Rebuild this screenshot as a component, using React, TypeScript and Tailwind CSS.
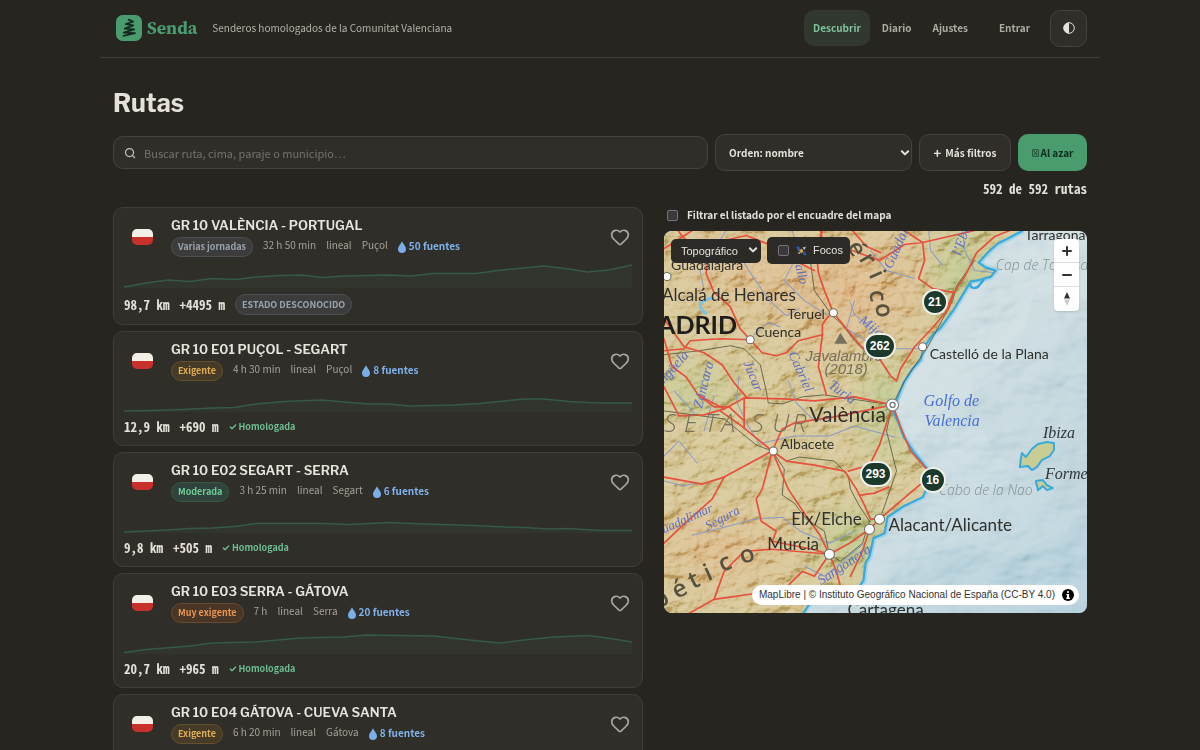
import type { ReactNode } from "react";
import { Heart, Search, Check } from "lucide-react";

const SANS = "font-['Noto_Sans_CJK_SC','Source_Sans_3','Open_Sans',sans-serif]";
const MONO = "font-['Noto_Sans_Mono_CJK_SC','DejaVu_Sans_Mono',monospace]";
const HEAD = "font-['Libre_Franklin','Inter','Noto_Sans_CJK_SC',sans-serif]";
const MAPUI = "font-['Liberation_Sans',Arial,sans-serif]";

type Tone = "gray" | "amber" | "green" | "orange";

interface Route {
  name: string;
  level: string;
  tone: Tone;
  time: string;
  town: string;
  springs: number;
  km: string;
  climb: string;
  approved: boolean;
  profile: string;
}

const tones: Record<Tone, string> = {
  gray: "border-[#4d5053] bg-[#3b3c3b] text-[#9ba3ad]",
  amber: "border-[#63502a] bg-[#463b26] text-[#e0ae55]",
  green: "border-[#355a45] bg-[#30433a] text-[#6fcf9b]",
  orange: "border-[#694a2f] bg-[#493627] text-[#ea9550]",
};

const routes: Route[] = [
  {
    name: "GR 10 VALÈNCIA - PORTUGAL",
    level: "Varias jornadas",
    tone: "gray",
    time: "32 h 50 min",
    town: "Puçol",
    springs: 50,
    km: "98,7 km",
    climb: "+4495 m",
    approved: false,
    profile: "0,23 22,19 44,16 66,17.5 88,14.5 112,15.5 132,13 155,11.5 178,11 198,13.5 220,12 265,11 287,12 308,9.5 352,9.5 378,6 400,4 420,2 445,5 464,8 485,6 508,1",
  },
  {
    name: "GR 10 E01 PUÇOL - SEGART",
    level: "Exigente",
    tone: "amber",
    time: "4 h 30 min",
    town: "Puçol",
    springs: 8,
    km: "12,9 km",
    climb: "+690 m",
    approved: true,
    profile: "0,23 30,22.5 60,21.5 88,20 110,19.5 132,16 160,13.5 198,12 220,14 245,16 265,16 285,18 330,17 356,15.5 380,13 400,11 420,11 445,13.5 464,14.5 485,15 508,15",
  },
  {
    name: "GR 10 E02 SEGART - SERRA",
    level: "Moderada",
    tone: "green",
    time: "3 h 25 min",
    town: "Segart",
    springs: 6,
    km: "9,8 km",
    climb: "+505 m",
    approved: true,
    profile: "0,23 44,21 66,19.5 88,19 110,17.5 132,14.5 200,14.5 225,15.5 265,13.5 300,15 350,16.5 380,18 400,18.5 425,20 445,19.5 475,21.5 508,21.5",
  },
  {
    name: "GR 10 E03 SERRA - GÁTOVA",
    level: "Muy exigente",
    tone: "orange",
    time: "7 h",
    town: "Serra",
    springs: 20,
    km: "20,7 km",
    climb: "+965 m",
    approved: true,
    profile: "0,22.5 22,19.5 66,16 88,13 132,12 176,8 220,7 242,5 310,6 350,10.5 376,13 400,10 430,7 464,5.5 490,9 508,12",
  },
  {
    name: "GR 10 E04 GÁTOVA - CUEVA SANTA",
    level: "Exigente",
    tone: "amber",
    time: "6 h 20 min",
    town: "Gátova",
    springs: 8,
    km: "18,4 km",
    climb: "+820 m",
    approved: true,
    profile: "0,22 60,18 120,14 200,12 280,9 360,11 440,8 508,6",
  },
];

function Chevron({ className }: { className: string }) {
  return (
    <svg viewBox="0 0 10 8" className={className} fill="none" stroke="currentColor" strokeWidth="2" strokeLinecap="round" strokeLinejoin="round" aria-hidden="true">
      <path d="M1.8 2.2 5 5.4 8.2 2.2" />
    </svg>
  );
}

function Logo() {
  return (
    <svg viewBox="0 0 26 26" className="size-[26px]" aria-hidden="true">
      <rect width="26" height="26" rx="6.5" fill="#4a9c6f" />
      <path d="M12.6 4.6 17 6.600 9.800 9.200 17.200 10.400 8.800 13.600 18.200 14.400 7.800 17.600 19 18.200 7.600 20.800" fill="none" stroke="#12291c" strokeWidth="1.800" strokeLinecap="round" strokeLinejoin="round" />
    </svg>
  );
}

function Header() {
  const link = "rounded-[10px] px-[9px] py-2 text-[10px] leading-5 font-bold";
  return (
    <header className="flex h-[58px] items-center border-b border-[#3f3d38] pr-[13px] pb-px pl-4">
      <a href="#inicio" className="flex items-center gap-[5px]">
        <Logo />
        <span className="font-['Source_Serif_4','Noto_Serif','Liberation_Serif',serif] text-[18px] leading-6 font-bold text-[#4a9c6f]">Senda</span>
      </a>
      <p className="ml-[15px] text-[10px] leading-5 text-[#b5b1a9]">Senderos homologados de la Comunitat Valenciana</p>
      <nav className="ml-auto flex items-center gap-[3px]">
        <a href="#descubrir" className={`${link} bg-[#31382f] text-[#7fc39b]`}>Descubrir</a>
        <a href="#diario" className={`${link} text-[#aeaaa2]`}>Diario</a>
        <a href="#ajustes" className={`${link} text-[#aeaaa2]`}>Ajustes</a>
        <a href="#entrar" className={`${link} ml-[10px] text-[#aeaaa2]`}>Entrar</a>
      </nav>
      <button aria-label="Cambiar tema" className="ml-[11px] flex size-[37px] items-center justify-center rounded-[10px] border border-[#45433e] bg-[#302e29]">
        <svg viewBox="0 0 12 12" className="size-3" aria-hidden="true">
          <circle cx="6" cy="6" r="5.300" fill="none" stroke="#e5e1da" strokeWidth="1" />
          <path d="M6 .7a5.300 5.300 0 0 0 0 10.600z" fill="#e5e1da" />
        </svg>
      </button>
    </header>
  );
}

function Toolbar() {
  const box = "rounded-[10px] border border-[#45433e] bg-[#302e29]";
  return (
    <div className="flex items-center gap-[7px]">
      <label className={`flex h-[33px] min-w-0 flex-1 items-center gap-2 px-[10px] ${box}`}>
        <Search className="size-3 shrink-0 text-[#c5c1b9]" strokeWidth={2.5} aria-hidden="true" />
        <input type="search" aria-label="Buscar ruta" placeholder="Buscar ruta, cima, paraje o municipio…" className="min-w-0 flex-1 bg-transparent text-[11px] leading-5 text-[#e5e1da] outline-none placeholder:text-[#75726b]" />
      </label>
      <div className="relative w-[197px] shrink-0">
        <select aria-label="Orden" className={`h-[37px] w-full appearance-none pl-[13px] text-[10px] font-bold text-[#e5e1da] ${box}`}>
          <option>Orden: nombre</option>
          <option>Orden: distancia</option>
        </select>
        <Chevron className="pointer-events-none absolute top-[15px] right-[2px] h-2 w-[10px] text-[#e5e1da]" />
      </div>
      <button className={`flex h-[37px] w-[92px] shrink-0 items-center justify-center gap-1 text-[10px] font-bold text-[#e5e1da] ${box}`}>
        <span className="text-[13px]">+</span>
        Más filtros
      </button>
      <button className="flex h-[37px] w-[69px] shrink-0 items-center justify-center gap-[2px] rounded-[10px] bg-[#4a9c6f] text-[10px] font-bold text-[#0f2c1c]">
        <svg viewBox="0 0 7 8" className="h-2 w-[7px]" fill="none" stroke="currentColor" strokeWidth=".7" aria-hidden="true">
          <path d="M.7.700h5.600v6.600H.7zM2 2l3 4M5 2 2 6" />
        </svg>
        Al azar
      </button>
    </div>
  );
}

function Flag() {
  return (
    <span className="mt-[6px] flex h-4 w-[21px] flex-col overflow-hidden rounded-[5px]" role="img" aria-label="GR">
      <span className="h-2 bg-[#f3efe7]" />
      <span className="h-2 bg-[#c8312b]" />
    </span>
  );
}

function Drop() {
  return (
    <svg viewBox="0 0 8 12" className="mt-[2px] h-3 w-2" aria-hidden="true">
      <path d="M4 .3C5.200 3 8 5.400 8 7.900a4 4 0 0 1-8 0C0 5.400 2.800 3 4 .3z" fill="#79aee8" />
    </svg>
  );
}

function RouteCard({ route }: { route: Route }) {
  return (
    <li className="rounded-[10px] border border-[#403e39] bg-[#302e29] px-[10px] pt-[7px] pb-[9px]">
      <div className="flex">
        <div className="flex w-[47px] shrink-0 justify-start pt-2 pl-2">
          <Flag />
        </div>
        <div className="min-w-0 flex-1">
          <h2 className={`${HEAD} text-[13px] leading-5 font-semibold text-[#e8e4dd]`}>{route.name}</h2>
          <div className="mt-[2px] flex items-start gap-[10px] text-[10px] leading-4 text-[#a5a199]">
            <span className={`h-5 rounded-full border px-[6px] text-[9px] leading-[18px] font-bold ${tones[route.tone]}`}>{route.level}</span>
            <span>{route.time}</span>
            <span>lineal</span>
            <span>{route.town}</span>
            <span className="flex items-center gap-[3px] leading-[18px] font-bold text-[#7fb1ea]">
              <Drop />
              {route.springs} fuentes
            </span>
          </div>
        </div>
        <button aria-label="Guardar en favoritos" className="flex w-6 items-center justify-center self-start pt-[12px] text-[#aaa69e]">
          <Heart className="size-[20px]" strokeWidth={2} />
        </button>
      </div>
      <svg viewBox="0 0 508 24" preserveAspectRatio="none" className="mt-[7px] block h-6 w-full" aria-hidden="true">
        <polygon points={`0,24 ${route.profile} 508,24`} fill="#31352d" />
        <polyline points={route.profile} fill="none" stroke="#355a45" strokeWidth="1.500" strokeLinejoin="round" />
      </svg>
      <div className={`mt-[6px] flex items-center gap-[10px] text-[13px] leading-[18px] font-bold text-[#e5e1da] ${MONO}`}>
        <span>{route.km}</span>
        <span>{route.climb}</span>
        {route.approved ? (
          <span className={`flex items-center gap-[2px] text-[9px] text-[#6dbf91] ${SANS}`}>
            <Check className="size-2" strokeWidth={4} aria-hidden="true" />
            Homologada
          </span>
        ) : (
          <span className={`h-[21px] rounded-full border border-[#4d5053] bg-[#3b3c3b] px-[6px] text-[9px] leading-[19px] text-[#9ba3ad] ${SANS}`}>ESTADO DESCONOCIDO</span>
        )}
      </div>
    </li>
  );
}

const COAST =
  "M358 0 345 7 333 13 323 22 314 32 321 37 331 40 326 46 316 49 306 51 298 64 289 79 276 97 268 104 259 117 256 129 247 139 239 152 231 172 228 179 234 192 239 206 250 222 261 236 269 244 265 252 258 266 239 275 223 286 220 302 209 307 205 325 201 332 199 349 193 358 173 361 158 365 146 371 139 382";

const red = [
  "M14 0 20 8 45 22 42 43 50 62 66 76 76 98 86 109 98 122 112 125 122 122 134 110 158 104 158 94 162 88 169 82",
  "M0 120 20 118 26 110 56 108 86 109",
  "M0 88 20 116 40 122 58 134 70 152 82 166",
  "M169 82 160 60 154 42 152 20 158 0 M156 0 162 24 172 30",
  "M169 82 182 98 197 116 215 128 226 145 232 150 236 138 250 116 268 97 284 78 289 62 300 46 312 22 330 6 345 0",
  "M158 104 154 136 158 150 162 164",
  "M0 108 8 136 22 146 34 164 50 176 65 176 80 190",
  "M228 174 190 166 150 170 120 168 80 167 60 178 34 164",
  "M0 156 15 185 40 184 60 178",
  "M80 167 80 196 M56 180 76 194 108 220",
  "M228 174 170 186 130 192 118 198 108 220",
  "M108 220 60 246 38 253 0 246",
  "M60 246 48 268 20 293 0 312",
  "M108 220 98 258 92 268 97 290 112 300 108 310 148 318 165 323",
  "M108 220 122 230 150 234 180 240 192 258 200 274 206 288 215 288",
  "M108 220 124 258 140 282 155 303 165 323 185 312 205 298 215 288 236 270 262 248",
  "M228 174 215 214 205 234 184 240",
  "M228 174 236 196 246 220 262 238 268 247",
  "M165 323 150 345 138 340 120 358 50 368 25 382",
  "M165 323 108 318 80 320 60 340 50 368",
  "M165 323 172 340 176 355 M205 298 198 320 186 345",
  "M196 264 210 262 224 256",
  "M188 0 202 16 216 22 M188 20 215 30 240 14 258 12 310 0 M240 0 258 12 260 30 254 48 268 58 289 62 282 78 270 78",
  "M0 18 10 12 28 0 M45 22 60 10 82 5 110 16 130 30 150 40",
];

const rivers = [
  "M62 0 48 22 36 40 40 60 M72 20 90 48 105 70 122 85 135 78 M90 104 104 92 116 96",
  "M75 145 72 170 84 195 96 214 M124 150 132 172 150 190 170 186",
  "M98 212 130 205 165 205 190 195 230 206 M0 250 20 255 32 252",
  "M28 304 60 296 90 288 118 286 136 300 165 312 190 300",
  "M0 225 15 210 33 232 M50 165 40 200 M10 160 30 182",
  "M190 70 182 98 205 112 228 118 254 118 M140 335 160 345 200 312",
  "M264 0 266 20 278 35 M298 0 300 20 310 40 328 42 M210 100 190 84 186 72",
  "M128 0 134 22 120 50 140 70 162 84 M206 20 222 40 250 48",
];

const rails = [
  "M0 124 35 120 66 115 80 118 96 134 102 160 104 172 118 173 138 166 160 164 200 170 228 174",
  "M146 30 150 60 168 85 178 94 190 110 208 128 M310 30 292 55 288 70 262 118 240 150 228 174 222 200 232 240 220 275 215 288",
  "M108 220 120 238 118 264 130 272 142 288 160 300 165 323 M0 180 60 188 92 214 108 220",
  "M122 230 135 226 170 230 184 245 186 258 195 275 205 290 198 312 176 330 165 323",
];

interface Label {
  t: string;
  x: number;
  y: number;
  s: number;
  r?: number;
  kind?: "city" | "river" | "sea" | "range" | "cape" | "island" | "capital";
}

const labels: Label[] = [
  { t: "Guadalajara", x: 7, y: 39, s: 14 },
  { t: "Alcalá de Henares", x: -2, y: 70, s: 17 },
  { t: "ADRID", x: -6, y: 103, s: 25, kind: "capital" },
  { t: "Teruel", x: 123, y: 88, s: 14 },
  { t: "Cuenca", x: 91, y: 106, s: 14 },
  { t: "Castelló de la Plana", x: 265, y: 128, s: 14 },
  { t: "València", x: 145, y: 191, s: 21 },
  { t: "Albacete", x: 116, y: 218, s: 14 },
  { t: "Elx/Elche", x: 127, y: 294, s: 17 },
  { t: "Murcia", x: 103, y: 319, s: 17 },
  { t: "Alacant/Alicante", x: 224, y: 300, s: 17 },
  { t: "Cartagena", x: 183, y: 385, s: 17 },
  { t: "Tarragona", x: 360, y: 9, s: 14 },
  { t: "Golfo de", x: 259, y: 175, s: 16, kind: "sea" },
  { t: "Valencia", x: 260, y: 195, s: 16, kind: "sea" },
  { t: "Ibiza", x: 378, y: 207, s: 16, kind: "island" },
  { t: "Formentera", x: 380, y: 248, s: 16, kind: "island" },
  { t: "Cap de Tortosa", x: 331, y: 39, s: 14, kind: "cape" },
  { t: "Cabo de la Nao", x: 274, y: 264, s: 14, kind: "cape" },
  { t: "Javalambre", x: 141, y: 130, s: 15, kind: "range" },
  { t: "(2018)", x: 160, y: 143, s: 15, kind: "range" },
  { t: "ngüela", x: 0, y: 153, s: 14, r: -48, kind: "river" },
  { t: "Záncara", x: 38, y: 178, s: 14, r: -76, kind: "river" },
  { t: "Júcar", x: 79, y: 132, s: 14, r: 68, kind: "river" },
  { t: "Cabriel", x: 124, y: 123, s: 14, r: 66, kind: "river" },
  { t: "Turia", x: 163, y: 156, s: 14, r: 36, kind: "river" },
  { t: "Mijares", x: 194, y: 91, s: 14, r: 38, kind: "river" },
  { t: "Gallo", x: 128, y: 26, s: 13, r: 74, kind: "river" },
  { t: "Guadalope", x: 227, y: 39, s: 14, r: -66, kind: "river" },
  { t: "l’Ebre", x: 296, y: 26, s: 14, r: -72, kind: "river" },
  { t: "uadalimar", x: 0, y: 302, s: 13, r: -24, kind: "river" },
  { t: "Segura", x: 44, y: 299, s: 13, r: -28, kind: "river" },
  { t: "Sangonera", x: 157, y: 354, s: 14, r: -34, kind: "river" },
];

const labelStyle: Record<string, string> = {
  city: "fill-[#30302c] font-['Lato','Open_Sans',sans-serif]",
  capital: "fill-[#1d1d1b] font-bold font-['Lato','Open_Sans',sans-serif]",
  river: "fill-[#5f70c4] italic font-['Liberation_Serif',serif]",
  sea: "fill-[#466fd8] italic font-['Liberation_Serif',serif]",
  island: "fill-[#303638] italic font-['Liberation_Serif',serif]",
  cape: "fill-[#84908f] italic font-['Open_Sans',sans-serif] font-light",
  range: "fill-[#77705c] italic font-['Liberation_Sans',sans-serif]",
};

const bigLetters: [string, number, number, number, number][] = [
  ["é", 182, 16, 24, 60],
  ["r", 194, 28, 24, 60],
  ["i", 204, 44, 24, 66],
  ["c", 205, 60, 24, 84],
  ["o", 211, 73, 24, 84],
  ["b", -6, 378, 24, -30],
  ["é", 13, 368, 24, -28],
  ["t", 29, 358, 24, -26],
  ["i", 44, 350, 24, -24],
  ["c", 58, 341, 24, -22],
  ["o", 78, 333, 24, -18],
];

const plateau: [string, number][] = [
  ["S", 0],
  ["E", 20],
  ["T", 41],
  ["A", 57],
  ["S", 87],
  ["U", 108],
  ["R", 128],
];

const towns: [number, number, number][] = [
  [169, 82, 4],
  [86, 109, 4],
  [3, 46, 4],
  [258, 116, 4],
  [109, 220, 4],
  [205, 298, 5],
  [215, 288, 5],
  [165, 323, 5],
];

function MapDrawing() {
  return (
    <svg viewBox="0 0 422 382" preserveAspectRatio="xMidYMid slice" className="block h-full w-full" role="img" aria-label="Mapa topográfico">
      <defs>
        <linearGradient id="sea" x1="0" y1="0" x2="1" y2="1">
          <stop offset="0" stopColor="#d3dfdf" />
          <stop offset=".6" stopColor="#c4d7dc" />
          <stop offset="1" stopColor="#abc8d6" />
        </linearGradient>
        <radialGradient id="high">
          <stop offset="0" stopColor="#d9a672" />
          <stop offset="1" stopColor="#d9a672" stopOpacity="0" />
        </radialGradient>
        <radialGradient id="low">
          <stop offset="0" stopColor="#aebb7a" />
          <stop offset="1" stopColor="#aebb7a" stopOpacity="0" />
        </radialGradient>
        <clipPath id="land">
          <path d={`${COAST} 0 382 0 0z`} />
        </clipPath>
        <filter id="relief" x="0" y="0" width="100%" height="100%">
          <feTurbulence type="fractalNoise" baseFrequency=".04 .055" numOctaves="4" seed="11" />
          <feDiffuseLighting lightingColor="#fff" surfaceScale="12" diffuseConstant="1.100">
            <feDistantLight azimuth="225" elevation="48" />
          </feDiffuseLighting>
        </filter>
        <filter id="seabed" x="0" y="0" width="100%" height="100%">
          <feTurbulence type="fractalNoise" baseFrequency=".012 .018" numOctaves="4" seed="4" />
          <feDiffuseLighting lightingColor="#fff" surfaceScale="20" diffuseConstant="1.100">
            <feDistantLight azimuth="225" elevation="50" />
          </feDiffuseLighting>
        </filter>
      </defs>
      <rect width="422" height="382" fill="url(#sea)" />
      <path d="M422 70 370 60 360 95 325 150 290 175 280 190 320 200 330 225 360 240 422 300z" fill="#b4c9d1" opacity=".3" />
      <path d="M240 330 300 312 345 325 422 290 422 382 200 382z" fill="#a8c8d5" opacity=".4" />
      <rect width="422" height="382" filter="url(#seabed)" className="opacity-50 mix-blend-soft-light" />
      <path d={COAST} fill="none" stroke="#8fd0ec" strokeWidth="6" strokeLinejoin="round" opacity=".7" />
      <g clipPath="url(#land)">
        <rect width="422" height="382" fill="#cdbb85" />
        <ellipse cx="185" cy="60" rx="110" ry="80" fill="url(#high)" opacity=".8" />
        <ellipse cx="80" cy="40" rx="90" ry="70" fill="url(#high)" opacity=".5" />
        <ellipse cx="55" cy="320" rx="100" ry="60" fill="url(#high)" opacity=".6" />
        <ellipse cx="300" cy="50" rx="50" ry="70" fill="url(#low)" />
        <ellipse cx="225" cy="180" rx="45" ry="70" fill="url(#low)" />
        <ellipse cx="190" cy="310" rx="60" ry="50" fill="url(#low)" />
        <ellipse cx="30" cy="160" rx="60" ry="40" fill="url(#low)" opacity=".7" />
        <rect width="422" height="382" filter="url(#relief)" className="opacity-60 mix-blend-soft-light" />
      </g>
      <path d={COAST} fill="none" stroke="#39a9dc" strokeWidth="2.200" strokeLinejoin="round" />
      <path d="M306 53c-2 5 6 6 9 1l4-5" fill="none" stroke="#39a9dc" strokeWidth="2.500" />
      <path d="M40 70c-6 2-5 10 3 13M40 70l8-3" fill="none" stroke="#7cc4e6" strokeWidth="3" />
      <g fill="#c8cd94" stroke="#39a9dc" strokeWidth="2" strokeLinejoin="round">
        <path d="M357 222l4 4 6-8 6-5 9-2 7 1 0 7-4 6-8 4-5 7-5 3-4-4-8 1 1-8z" />
        <path d="M371 250l7-1 4 5 6 3-6 2-4-4-5 4z" />
      </g>
      <g fill="none" strokeLinejoin="round" strokeLinecap="round">
        {rivers.map((d) => (
          <path key={d} d={d} stroke="#8a9bc4" strokeWidth="1" />
        ))}
        {rails.map((d) => (
          <path key={d} d={d} stroke="#5e5f47" strokeWidth=".9" />
        ))}
        {red.map((d) => (
          <path key={d} d={d} stroke="#e5513d" strokeWidth="1.700" />
        ))}
      </g>
      <path d="M176 102l7 11h-13z" fill="#77705f" />
      {bigLetters.map(([t, x, y, s, r]) => (
        <text key={`${t}${x}`} fontSize={s} transform={`translate(${x} ${y}) rotate(${r})`} className="fill-[#55523f] font-['Open_Sans',sans-serif] font-semibold">{t}</text>
      ))}
      {plateau.map(([t, x]) => (
        <text key={x} x={x} y="201" fontSize="25" className="fill-[#77725b] font-['Open_Sans',sans-serif] font-light italic">{t}</text>
      ))}
      {labels.map((l) => (
        <text key={l.t} fontSize={l.s} transform={`translate(${l.x} ${l.y}) rotate(${l.r ?? 0})`} className={labelStyle[l.kind ?? "city"]}>{l.t}</text>
      ))}
      {towns.map(([x, y, r]) => (
        <circle key={`${x}-${y}`} cx={x} cy={y} r={r} fill="#fff" stroke="#6c6a60" strokeWidth="1" />
      ))}
      <circle cx="228" cy="174" r="6" fill="#fff" stroke="#777" strokeWidth="1" />
      <circle cx="228" cy="174" r="2.500" fill="#fff" stroke="#777" strokeWidth="1.300" />
    </svg>
  );
}

function Cluster({ className, children }: { className: string; children: ReactNode }) {
  return (
    <button className={`absolute flex h-[26px] min-w-[26px] -translate-x-1/2 -translate-y-1/2 items-center justify-center rounded-full border-2 border-[#eef0ea] bg-[#1b3a2c] px-1 text-[12px] leading-none font-bold text-white ${className}`}>
      {children}
    </button>
  );
}

function MapPanel() {
  return (
    <section aria-label="Mapa" className={`relative aspect-[422/381] overflow-hidden rounded-[8px] ${MAPUI}`}>
      <MapDrawing />
      <Cluster className="top-[18.500%] left-[64%]">21</Cluster>
      <Cluster className="top-[30%] left-[51%]">262</Cluster>
      <Cluster className="top-[63.500%] left-[50%]">293</Cluster>
      <Cluster className="top-[65.300%] left-[63.500%]">16</Cluster>
      <div className="absolute top-[6px] left-[7px] flex items-start gap-[6px]">
        <div className="relative mt-px">
          <select aria-label="Capa base" className="h-6 w-[90px] appearance-none rounded-[5px] bg-[#2b2a26] pl-[10px] text-[11px] text-[#e5e1da]">
            <option>Topográfico</option>
            <option>Satélite</option>
          </select>
          <Chevron className="pointer-events-none absolute top-2 right-[3px] h-2 w-[10px] text-[#e5e1da]" />
        </div>
        <label className="flex h-[27px] w-[83px] items-center rounded-[5px] bg-[#2b2a26] pl-[11px] text-[11px] text-[#e5e1da]">
          <input type="checkbox" className="size-[11px] appearance-none rounded-[2px] border border-[#77757a] bg-[#39383a]" />
          <svg viewBox="0 0 12 12" className="mx-[6px] size-3" aria-hidden="true">
            <path d="M1 1.500 4 1.500 5.500 4.500 3 6zM7.500 7.500 10 6.500 11.500 10 9 10.500z" fill="#2f55b5" />
            <path d="M4 5.500 7 3.500 8.500 6.500 6 8.500z" fill="#c9a24a" />
            <path d="M7.500 2.500 11 1.500 9.500 5z" fill="#b9bfc5" />
            <path d="M2.500 8 4.500 7 5 9z" fill="#d8d5cd" />
          </svg>
          Focos
        </label>
      </div>
      <div className="absolute top-2 right-2 flex w-[25px] flex-col divide-y divide-[#ddd] overflow-hidden rounded-[4px] bg-white shadow">
        <button aria-label="Acercar" className="flex h-6 items-center justify-center">
          <svg viewBox="0 0 10 10" className="size-[10px]" stroke="#333" strokeWidth="2" strokeLinecap="round" aria-hidden="true"><path d="M1 5h8M5 1v8" /></svg>
        </button>
        <button aria-label="Alejar" className="flex h-6 items-center justify-center">
          <svg viewBox="0 0 10 10" className="size-[10px]" stroke="#333" strokeWidth="2" strokeLinecap="round" aria-hidden="true"><path d="M1 5h8" /></svg>
        </button>
        <button aria-label="Orientar al norte" className="flex h-6 items-center justify-center">
          <svg viewBox="0 0 8 14" className="h-[14px] w-2" aria-hidden="true"><path d="M4 0l3 6.500H1z" fill="#333" /><path d="M4 14 1 7.500h6z" fill="#ccc" /></svg>
        </button>
      </div>
      <div className="absolute right-2 bottom-2 flex h-5 items-center gap-[7px] rounded-full bg-white pr-[5px] pl-[7px] text-[10px] whitespace-nowrap text-[#333]">
        <span>MapLibre | © Instituto Geográfico Nacional de España (CC-BY 4.0)</span>
        <svg viewBox="0 0 12 12" className="size-3" aria-hidden="true">
          <circle cx="6" cy="6" r="6" fill="#000" />
          <path d="M5 2.200h2v1.600H5zM4.400 5H7v3.600h.8V10H4.300V8.600H5V6.300h-.6z" fill="#fff" />
        </svg>
      </div>
    </section>
  );
}

export default function App() {
  return (
    <div className={`min-h-screen bg-[#272520] text-[#e5e1da] ${SANS}`}>
      <div className="mx-auto max-w-[1000px]">
        <Header />
        <main className="px-[13px] pt-[27px]">
          <h1 className={`${HEAD} text-[25px] leading-9 font-bold`}>Rutas</h1>
          <div className="mt-[13px]">
            <Toolbar />
          </div>
          <p className={`mt-2 text-right text-[13px] leading-5 font-bold ${MONO}`}>592 de 592 rutas</p>
          <div className="mt-2 grid grid-cols-[530fr_423fr] items-start gap-[21px]">
            <ul className="flex flex-col gap-[6px]">
              {routes.map((r) => (
                <RouteCard key={r.name} route={r} />
              ))}
            </ul>
            <div>
              <label className="mb-2 flex h-4 items-center gap-[9px] pl-[3px] text-[10px] leading-4 font-bold">
                <input type="checkbox" className="size-[11px] appearance-none rounded-[2px] border border-[#77757a] bg-[#39383a]" />
                Filtrar el listado por el encuadre del mapa
              </label>
              <MapPanel />
            </div>
          </div>
        </main>
      </div>
    </div>
  );
}
